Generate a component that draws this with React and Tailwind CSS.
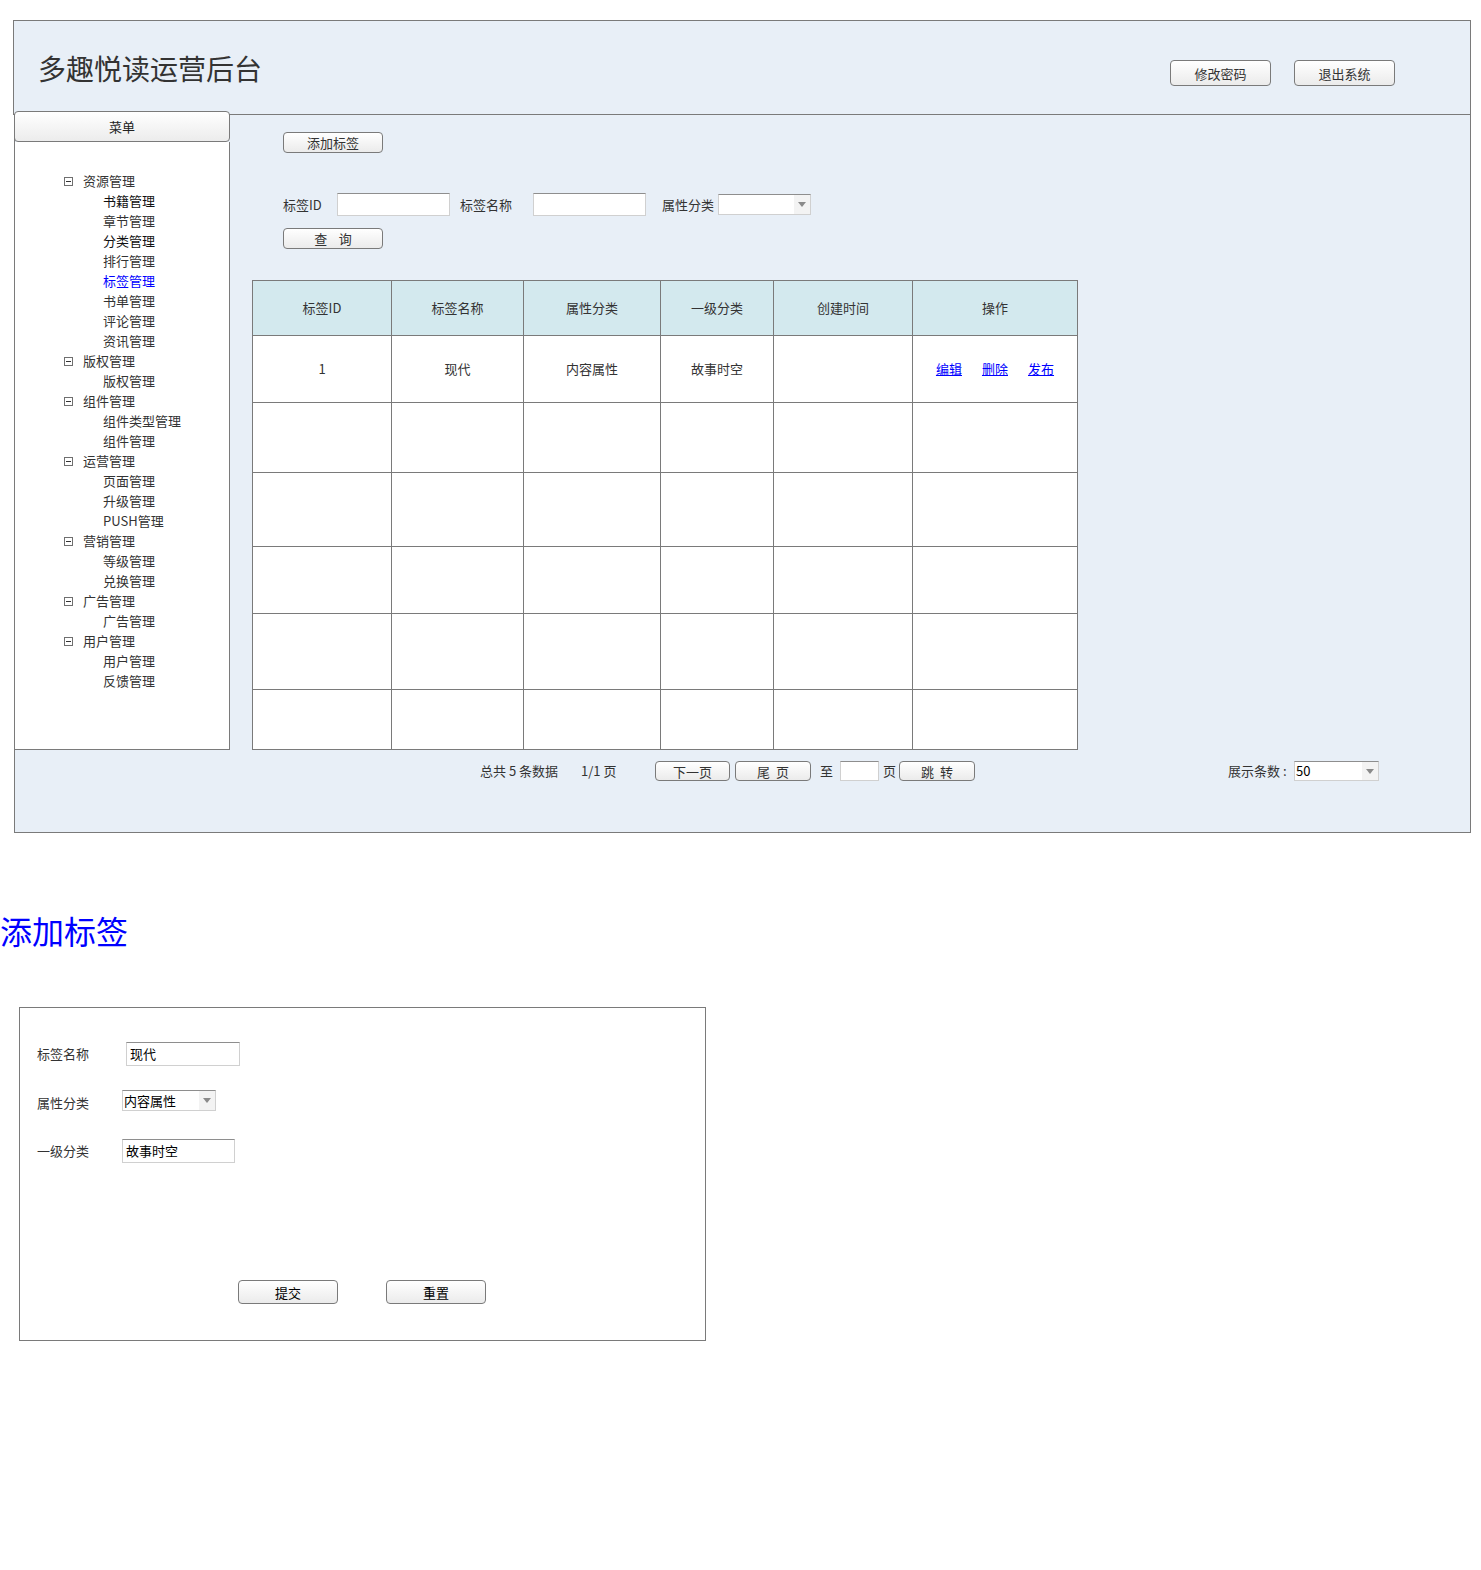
import React from 'react'

const MENU = [
  { name: '资源管理', items: [['书籍管理', 'dark'], ['章节管理'], ['分类管理', 'dark'], ['排行管理'], ['标签管理', 'active'], ['书单管理'], ['评论管理'], ['资讯管理']] },
  { name: '版权管理', items: [['版权管理']] },
  { name: '组件管理', items: [['组件类型管理'], ['组件管理']] },
  { name: '运营管理', items: [['页面管理'], ['升级管理'], ['PUSH管理']] },
  { name: '营销管理', items: [['等级管理'], ['兑换管理']] },
  { name: '广告管理', items: [['广告管理']] },
  { name: '用户管理', items: [['用户管理'], ['反馈管理']] },
]

const COLS = [139, 132, 137, 113, 139, 165]
const ROWS = [67, 70, 74, 67, 76, 60]

function Btn({ children, className = '' }) {
  return (
    <button className={`flex items-center justify-center rounded-[4px] border border-[#7a7a7a] bg-linear-to-b from-white to-[#ebebeb] text-[13px] leading-none text-[#333] ${className}`}>
      {children}
    </button>
  )
}

function Field({ value, className = '' }) {
  return (
    <div className={`flex items-center border border-[#d0d0d0] border-t-[#8e8e8e] bg-white px-[3px] text-[13px] text-black ${className}`}>
      {value}
    </div>
  )
}

function Select({ value, className = '' }) {
  return (
    <div className={`flex border border-[#d0d0d0] border-t-[#8e8e8e] bg-white ${className}`}>
      <span className="flex flex-1 items-center pl-[1px] text-[13px] text-black">{value}</span>
      <span className="flex w-[16px] items-center justify-center bg-[#f3f3f3]">
        <span className="border-x-[4px] border-t-[5px] border-x-transparent border-t-[#8a8a8a]" />
      </span>
    </div>
  )
}

function Collapse() {
  return (
    <span className="flex h-[9px] w-[9px] items-center justify-center border border-[#6f6f6f] bg-white">
      <span className="h-px w-[5px] bg-[#333]" />
    </span>
  )
}

function Sidebar() {
  return (
    <aside className="relative z-10 -ml-px -mt-[4px] w-[216px] shrink-0">
      <div className="flex h-[31px] items-center justify-center rounded-[4px] border border-[#7a7a7a] bg-linear-to-b from-white to-[#ececec] text-[13px] text-[#222]">
        菜单
      </div>
      <div className="h-[608px] border-x border-b border-[#7a7a7a] bg-white pt-[29px]">
        {MENU.map((g) => (
          <div key={g.name}>
            <div className="flex h-[20px] items-center pl-[49px] text-[13px] text-[#333]">
              <Collapse />
              <span className="ml-[10px]">{g.name}</span>
            </div>
            {g.items.map(([name, tone]) => (
              <div
                key={name}
                className={`flex h-[20px] items-center pl-[88px] text-[13px] ${tone === 'active' ? 'text-[#0000ff]' : tone === 'dark' ? 'text-[#111]' : 'text-[#333]'}`}
              >
                {name}
              </div>
            ))}
          </div>
        ))}
      </div>
    </aside>
  )
}

function TagTable() {
  return (
    <table className="w-[826px] table-fixed border-collapse text-[13px] text-[#333]">
      <colgroup>
        {COLS.map((w, i) => (
          <col key={i} style={{ width: w }} />
        ))}
      </colgroup>
      <thead>
        <tr className="h-[55px] bg-[#d3e9ee]">
          {['标签ID', '标签名称', '属性分类', '一级分类', '创建时间', '操作'].map((h) => (
            <th key={h} className="border border-[#7a7a7a] text-center font-normal">{h}</th>
          ))}
        </tr>
      </thead>
      <tbody className="bg-white">
        {ROWS.map((h, i) => (
          <tr key={i} style={{ height: h }}>
            {i === 0 ? (
              <>
                <td className="border border-[#7a7a7a] text-center">1</td>
                <td className="border border-[#7a7a7a] text-center">现代</td>
                <td className="border border-[#7a7a7a] text-center">内容属性</td>
                <td className="border border-[#7a7a7a] text-center">故事时空</td>
                <td className="border border-[#7a7a7a]" />
                <td className="border border-[#7a7a7a]">
                  <div className="flex justify-center gap-[20px] text-[#0000ff] underline">
                    <a>编辑</a>
                    <a>删除</a>
                    <a>发布</a>
                  </div>
                </td>
              </>
            ) : (
              COLS.map((_, j) => <td key={j} className="border border-[#7a7a7a]" />)
            )}
          </tr>
        ))}
      </tbody>
    </table>
  )
}

export default function App() {
  return (
    <div className="min-h-[1570px] w-[1481px] bg-white font-['Noto_Sans_CJK_SC',sans-serif] text-[#333]">
      <div className="pl-[13px] pt-[20px]">
        <header className="flex h-[95px] w-[1458px] items-start justify-between border border-[#7a7a7a] bg-[#e8eff7]">
          <h1 className="ml-[24px] mt-[27px] text-[28px] leading-[40px] text-[#333]">多趣悦读运营后台</h1>
          <div className="mr-[75px] mt-[39px] flex gap-[23px]">
            <Btn className="h-[26px] w-[101px]">修改密码</Btn>
            <Btn className="h-[26px] w-[101px]">退出系统</Btn>
          </div>
        </header>

        <main className="ml-px h-[718px] w-[1457px] border-x border-b border-[#7a7a7a] bg-[#e8eff7]">
          <div className="flex">
            <Sidebar />
            <section className="pl-[22px] pt-[17px]">
              <div className="pl-[31px]">
                <Btn className="h-[21px] w-[100px]">添加标签</Btn>
                <div className="mt-[40px] flex h-[23px] items-center text-[13px]">
                  <span className="w-[54px]">标签ID</span>
                  <Field className="h-[23px] w-[113px]" />
                  <span className="ml-[10px] w-[73px]">标签名称</span>
                  <Field className="h-[23px] w-[113px]" />
                  <span className="ml-[16px] w-[56px]">属性分类</span>
                  <Select className="h-[21px] w-[93px]" />
                </div>
                <Btn className="mt-[12px] h-[21px] w-[100px]">查&nbsp;&nbsp;&nbsp;&nbsp;询</Btn>
              </div>
              <div className="mt-[31px]">
                <TagTable />
              </div>
            </section>
          </div>

          <div className="mt-[10px] flex h-[22px] items-center pl-[465px] text-[13px] text-[#333]">
            <span className="w-[101px]">总共 5 条数据</span>
            <span className="w-[74px]">1/1 页</span>
            <Btn className="h-[20px] w-[75px]">下一页</Btn>
            <Btn className="ml-[5px] h-[20px] w-[76px]">尾&nbsp;&nbsp;页</Btn>
            <span className="ml-[9px] w-[20px]">至</span>
            <Field className="h-[20px] w-[39px]" />
            <span className="ml-[4px] w-[16px]">页</span>
            <Btn className="h-[20px] w-[76px]">跳&nbsp;&nbsp;转</Btn>
            <span className="ml-[253px] w-[66px]">展示条数 :</span>
            <Select value="50" className="h-[20px] w-[85px]" />
          </div>
        </main>
      </div>

      <h2 className="mt-[77px] text-[32px] leading-[40px] text-[#0000ff]">添加标签</h2>

      <div className="ml-[19px] mt-[57px] h-[334px] w-[687px] border border-[#7a7a7a] pl-[17px] pt-[34px] text-[13px]">
        <div className="flex h-[24px] items-center">
          <span className="w-[89px] text-[#333]">标签名称</span>
          <Field value="现代" className="h-[24px] w-[114px]" />
        </div>
        <div className="mt-[24px] flex h-[21px] items-center">
          <span className="mt-[5px] w-[85px] text-[#333]">属性分类</span>
          <Select value="内容属性" className="h-[21px] w-[94px]" />
        </div>
        <div className="mt-[28px] flex h-[24px] items-center">
          <span className="w-[85px] text-[#333]">一级分类</span>
          <Field value="故事时空" className="h-[24px] w-[113px]" />
        </div>
        <div className="ml-[201px] mt-[117px] flex gap-[48px]">
          <Btn className="h-[24px] w-[100px] text-black">提交</Btn>
          <Btn className="h-[24px] w-[100px] text-black">重置</Btn>
        </div>
      </div>
    </div>
  )
}
